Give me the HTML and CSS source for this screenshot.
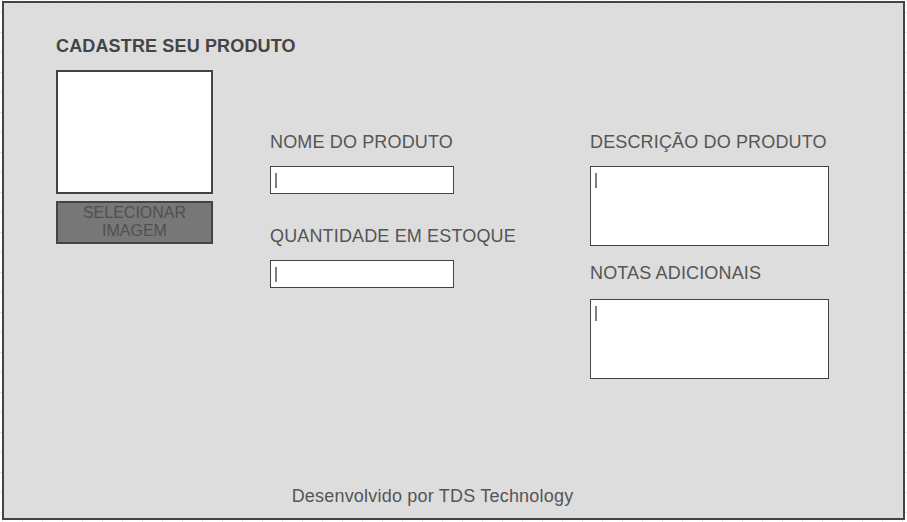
FILE: index.html
```html
<!DOCTYPE html>
<html lang="pt-BR">
<head>
    <meta charset="UTF-8">
    <meta name="viewport" content="width=device-width, initial-scale=1.0">
    <title>Cadastre seu produto</title>
    <link rel="stylesheet" href="styles.css">
</head>
<body>

<div class="panel">
    <h1 class="title">CADASTRE SEU PRODUTO</h1>

    <div class="form">
        <!-- Imagem do produto -->
        <div class="image-col">
            <div class="image-box"></div>
            <button class="select-btn">SELECIONAR<br>IMAGEM</button>
        </div>

        <!-- Campos curtos -->
        <div class="field-col">
            <label class="label">NOME DO PRODUTO</label>
            <div class="input"><span class="caret"></span></div>
            <label class="label label-second">QUANTIDADE EM ESTOQUE</label>
            <div class="input"><span class="caret"></span></div>
        </div>

        <!-- Campos longos -->
        <div class="field-col">
            <label class="label">DESCRIÇÃO DO PRODUTO</label>
            <div class="textarea"><span class="caret"></span></div>
            <label class="label label-notes">NOTAS ADICIONAIS</label>
            <div class="textarea"><span class="caret"></span></div>
        </div>
    </div>

    <footer class="footer">Desenvolvido por TDS Technology</footer>
</div>

</body>
</html>
```

FILE: styles.css
```css
html {
    background-color: #fff;
}
body {
    font-family: "Liberation Sans", Arial, sans-serif;
    margin: 0;
    padding: 1px 0 0 2px;
    min-height: 521px;
    background-image:
        linear-gradient(to right, #e6e6e6 1px, transparent 1px),
        linear-gradient(to bottom, #e6e6e6 1px, transparent 1px);
    background-size: 20px 20px;
    background-position: 2px 12px;
    color: #555;
}
.panel {
    box-sizing: border-box;
    width: 903px;
    height: 519px;
    background-color: #dddddd;
    border: 2px solid #444;
    padding: 33px 0 11px 52px;
    display: flex;
    flex-direction: column;
}
.title {
    margin: 0;
    font-size: 18px;
    line-height: 21px;
    font-weight: bold;
    letter-spacing: 0.15px;
    color: #444;
}
.form {
    display: grid;
    grid-template-columns: 214px 320px 239px;
    margin-top: 13px;
}
.image-box {
    box-sizing: border-box;
    width: 157px;
    height: 124px;
    background-color: #fff;
    border: 2px solid #444;
}
.select-btn {
    box-sizing: border-box;
    display: block;
    width: 157px;
    height: 43px;
    margin-top: 7px;
    padding: 1px 0 2px;
    background-color: #777;
    border: 2px solid #444;
    color: #505050;
    font-family: inherit;
    font-size: 16px;
    line-height: 18px;
}
.field-col {
    display: flex;
    flex-direction: column;
    align-items: flex-start;
    margin-top: 62px;
}
.label {
    display: block;
    font-size: 18px;
    line-height: 21px;
    letter-spacing: 0.15px;
    color: #555;
    margin-bottom: 13px;
}
.label-second {
    margin-top: 32px;
}
.label-notes {
    margin-top: 17px;
    margin-bottom: 15px;
}
.input,
.textarea {
    box-sizing: border-box;
    position: relative;
    background-color: #fff;
    border: 1.5px solid #444;
}
.input {
    width: 184px;
    height: 28px;
}
.textarea {
    width: 239px;
    height: 80px;
}
.caret {
    position: absolute;
    left: 4px;
    top: 6px;
    width: 2px;
    height: 15px;
    background-color: #808080;
}
.footer {
    margin-top: auto;
    padding-right: 94px;
    text-align: center;
    font-size: 18px;
    line-height: 21px;
    letter-spacing: 0.2px;
    color: #555;
}
```
